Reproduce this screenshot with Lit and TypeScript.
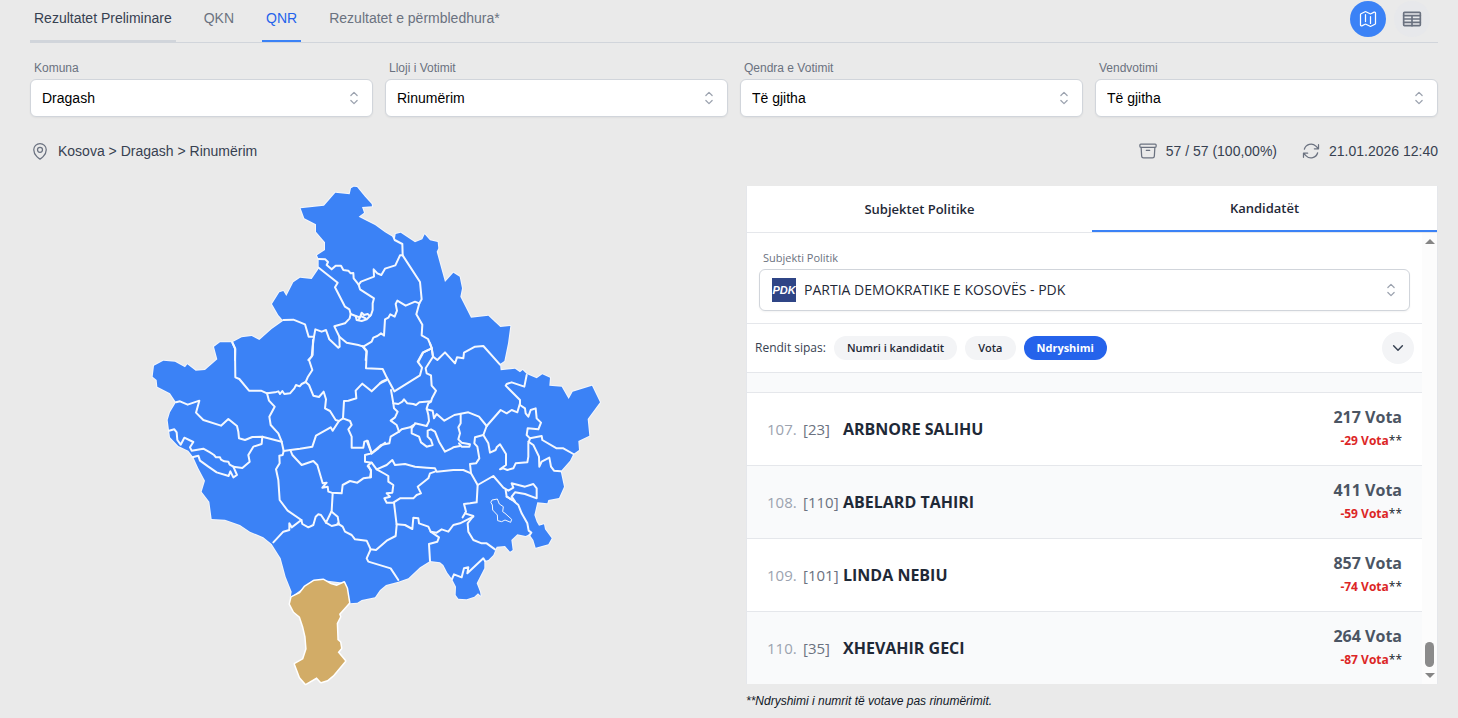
import { LitElement, html, svg, css } from "lit";
import { customElement, property, state } from "lit/decorators.js";
import { classMap } from "lit/directives/class-map.js";

/* ---------- icons ---------- */

const strokeIcon = (d: string[], size = 20, width = 1.5) => html`
  <svg class="icon" width=${size} height=${size} viewBox="0 0 24 24" fill="none" stroke="currentColor"
    stroke-width=${width} stroke-linecap="round" stroke-linejoin="round" aria-hidden="true">
    ${d.map((p) => svg`<path d=${p} />`)}
  </svg>`;

const ICONS = {
  map: [
    "M9 6.75V15m6-6v8.25m.503 3.498 4.875-2.437c.381-.19.622-.58.622-1.006V4.82c0-.836-.88-1.38-1.628-1.006l-3.869 1.934c-.317.159-.69.159-1.006 0L9.503 3.252a1.125 1.125 0 0 0-1.006 0L3.622 5.689C3.24 5.88 3 6.27 3 6.695V19.18c0 .836.88 1.38 1.628 1.006l3.869-1.934c.317-.159.69-.159 1.006 0l4.994 2.497c.317.158.69.158 1.006 0Z",
  ],
  table: [
    "M3 4h18a1 1 0 0 1 1 1v14a1 1 0 0 1-1 1H3a1 1 0 0 1-1-1V5a1 1 0 0 1 1-1Z",
    "M2 8h20M2 12h20M2 16h20M12 8v12",
  ],
  pin: [
    "M15 10.5a3 3 0 1 1-6 0 3 3 0 0 1 6 0Z",
    "M19.5 10.5c0 7.142-7.5 11.25-7.5 11.25S4.5 17.642 4.5 10.5a7.5 7.5 0 1 1 15 0Z",
  ],
  archive: [
    "m20.25 7.5-.625 10.632a2.25 2.25 0 0 1-2.247 2.118H6.622a2.25 2.25 0 0 1-2.247-2.118L3.75 7.5M10 11.25h4M3.375 7.5h17.25c.621 0 1.125-.504 1.125-1.125v-1.5c0-.621-.504-1.125-1.125-1.125H3.375c-.621 0-1.125.504-1.125 1.125v1.5c0 .621.504 1.125 1.125 1.125Z",
  ],
  refresh: [
    "M16.023 9.348h4.992v-.001M2.985 19.644v-4.992m0 0h4.992m-4.993 0 3.181 3.183a8.25 8.25 0 0 0 13.803-3.7M4.031 9.865a8.25 8.25 0 0 1 13.803-3.7l3.181 3.182m0-4.991v4.99",
  ],
  chevronDown: ["m19.5 8.25-7.5 7.5-7.5-7.5"],
  upDown: ["M8.25 15 12 18.75 15.75 15m-7.5-6L12 5.25 15.75 9"],
};

/* ---------- map geometry, drawn in four tiles plus the south ---------- */

const COUNTRY =
  "467,85 537,77 571,38 614,43 618,25 626,20 636,21 660,50 680,72 681,79 651,81 657,98 641,110 660,120 690,135 720,157 750,175 " +
  "752,162 767,158 810,187 832,178 839,163 855,181 878,186 880,205 875,215 900,306 925,278 944,290 951,325 946,350 978,413 " +
  "1030,407 1066,441 1096,438 1089,490 1078,543 1065,552 1067,571 1110,566 1125,577 1133,570 1145,582 1175,595 1192,583 " +
  "1215,593 1213,617 1250,620 1271,657 1283,635 1341,617 1365,667 1328,717 1333,767 1300,783 1302,810 1285,822 1275,842 " +
  "1247,874 1257,920 1242,954 1210,960 1207,970 1177,967 1168,1005 1175,1025 1182,1037 1197,1033 1200,1048 1220,1075 " +
  "1210,1093 1172,1103 1165,1080 1153,1063 1142,1068 1117,1063 1099,1080 1103,1110 1095,1115 1080,1098 1055,1100 1045,1125 " +
  "1030,1140 1018,1143 1018,1165 995,1210 1005,1235 1007,1247 999,1240 988,1250 965,1258 940,1256 932,1245 933,1220 921,1197 " +
  "907,1178 895,1155 885,1147 855,1143 825,1162 790,1195 760,1205 723,1215 705,1230 690,1252 650,1260 637,1268 613,1270 " +
  "597,1208 530,1200 480,1220 437,1252 440,1235 422,1190 407,1135 380,1092 355,1072 315,1055 285,1035 240,1019 200,1017 " +
  "193,965 170,935 180,902 160,865 145,832 130,812 100,798 75,772 72,750 68,720 75,697 93,667 75,640 37,620 35,600 23,590 " +
  "27,557 55,542 90,545 120,562 127,553 152,572 180,570 217,538 207,500 225,487 262,487 290,472 320,468 343,480 380,447 " +
  "415,422 400,405 381,372 403,337 415,333 424,348 445,307 465,293 500,297 521,266 521,237 516,226 540,210 540,187 513,155 " +
  "513,133 478,115";

const DRAGASH =
  "150,372 155,352 180,340 195,320 222,303 250,300 272,313 290,318 312,308 320,325 327,368 297,402 300,410 290,430 292,480 " +
  "300,487 303,505 293,517 315,543 280,585 262,600 243,606 230,592 197,611 180,592 165,552 190,538 200,507 197,470 190,440 " +
  "180,410 162,395";

const ENCLAVE =
  "757,60 772,57 778,72 790,80 788,95 795,100 815,118 812,127 795,120 785,125 773,122 772,105 758,90 757,75 753,68";

interface Tile { x: number; y: number; lines: string[]; }

const BORDERS: Tile[] = [
  {
    x: 0, y: 0,
    lines: [
      "521,237 541,238 549,246 545,255 560,268 572,257 588,257 595,270 610,272 617,280 625,279 626,295 641,314",
      "641,314 648,305 687,290 686,268 697,280 709,285 720,266 751,256 765,226 773,226",
      "521,263 578,308 570,322 600,380 613,388 617,402 614,415 600,430 568,439 583,470 584,500 580,503 553,478 543,450 530,455 511,448 507,470 503,500 500,530 490,540",
      "641,314 645,328 687,355 683,370 683,390 678,405 665,418 650,423 635,420 632,408 617,402",
      "632,408 645,412 650,398 657,405 668,402 675,408",
      "640,420 648,408 662,415",
      "415,420 445,419 480,433 491,470 506,470",
      "583,470 605,488 640,495 655,500 680,485 685,473 697,468 708,460 717,466",
      "655,500 665,512 662,540",
      "262,487 271,507 270,540",
    ],
  },
  {
    x: 645, y: 0,
    lines: [
      "100,170 104,180 127,192 128,226 180,306 185,358 178,370 169,403 187,434 185,466 204,477 215,503 219,530",
      "178,370 165,365 137,377 112,362 107,372 111,392 104,410 91,403 85,413 75,418 72,466",
      "215,505 190,517 175,545",
    ],
  },
  {
    x: 0, y: 480,
    lines: [
      "262,8 270,25 271,112 283,117 312,152 348,152 366,160 390,157 400,154 405,162 412,153 418,162 435,160 448,145 453,135 464,139 470,132 482,126",
      "504,0 503,45 492,60 502,90 488,112 482,126 492,135 505,167 522,171 536,155 543,178 540,205 555,213 572,240 582,243",
      "725,118 710,125 680,154 652,131 632,152 634,175 610,182 597,183 594,235 582,243 563,272 557,262 513,287 502,320 465,326 436,330 416,333",
      "366,160 372,182 389,200 373,230 377,255 400,280 410,305 416,333 413,345 403,347 404,370 393,388 400,420 404,480 428,512 469,540",
      "93,187 105,184 128,194 163,182 153,218 175,240 228,257 250,237 276,258 280,275 282,295 300,300 322,291 352,290 410,305",
      "352,290 350,312 325,320 310,345 314,365 292,384 265,380",
      "72,272 88,268 95,277 97,300 107,314 118,293 145,306 135,322 140,332 175,326 195,337 207,345 213,352 225,352 228,359 238,364 250,365 254,374 265,380 276,405 265,412 256,394 251,408 215,397 190,380 165,362 160,347 142,352",
      "436,330 442,345 470,375 505,363 517,375 533,430 545,428 532,443 548,440 550,455 560,458 590,460 593,435 615,423 637,428 655,415 678,412 678,390 668,378",
      "594,235 615,243 620,255 610,268 620,290 620,323 655,323 658,305 668,302 680,340",
    ],
  },
  {
    x: 645, y: 480,
    lines: [
      "7,18 20,35 18,85 68,87 80,112 103,154 180,106 186,83 173,65 188,38 215,25",
      "210,10 215,25 219,50 232,60 255,37 285,70 291,52 310,55 312,38 345,20 370,18 420,74",
      "60,130 80,120",
      "219,50 197,85 200,100 213,106 215,137 228,152 216,175 213,185 205,190 200,205 205,225 207,243 200,258 165,250",
      "93,150 100,190 115,192 127,185 132,178 142,190 160,192 168,195 178,187 213,184",
      "100,190 102,205 113,215 105,232 92,242 110,255 117,275 92,290 88,310 63,315 35,340",
      "117,275 125,268 150,262 165,252 155,265 155,280 177,290 183,307 200,320 218,315 213,300 203,290 203,272 213,268 225,275 237,305 255,335 275,325 280,322 300,318",
      "200,208 218,212 222,235 230,222 253,242 283,225 325,217 357,230 380,258",
      "302,222 302,250 295,262 300,280 295,298 305,308 330,313 328,320 305,320 297,310",
      "380,258 370,285 345,292 343,310 352,320 358,355 348,370 330,372 333,400 353,435 350,487 330,490 312,492 318,515 308,532",
      "380,258 422,210 440,220 455,210 472,217 480,190",
      "500,105 493,140 455,127 440,132 437,137 480,180 480,195 495,205 497,220 505,230 512,210 527,205 530,235 543,248 535,268 503,265 500,285 510,295",
      "510,295 545,288 547,300 590,325 610,325 640,342",
      "510,295 505,310 505,350 502,367 467,370 460,385 442,390 430,385 420,388 438,375 438,342 420,313 410,322 407,330 390,338 385,310 370,285",
      "505,305 520,315 537,350 538,380 545,365 568,353 573,380 582,392 602,394",
      "20,302 35,340 15,345 15,365 35,368 50,388 80,375 97,360 105,375 135,372 165,380 200,383 225,385 230,395 280,390 310,390 333,400",
      "35,340 55,325 75,308",
      "35,368 25,375 33,395 30,412",
      "50,388 75,402 85,408 85,425 100,435 97,458 80,460 90,470 73,475 80,488 100,488 120,475 160,475 170,465 183,460 173,440 205,415 210,400 225,395",
      "353,435 400,408 430,443 445,452 460,443 455,430 495,440 520,432 530,445 530,475 495,462 465,457 455,470 465,485",
      "437,450 440,470 455,478",
    ],
  },
  {
    x: 285, y: 900,
    lines: [
      "184,120 155,142 148,130 148,150 130,155 100,187",
      "184,120 187,132 205,142 220,135 227,110 235,103 243,105 258,128 275,93 278,40",
      "275,95 293,110 297,133 275,138 258,128",
      "293,130 308,140 315,155 335,165 345,178 380,182 392,208 408,210 440,182 467,168 470,135 462,68",
      "392,208 380,235 385,245 452,265 475,300",
      "470,133 495,135 517,147 520,113 535,115 537,130 565,140 572,155 590,158 605,148 625,155 640,135 660,130 700,110",
      "572,155 597,172 592,185 567,192 570,243",
      "675,100 700,108 683,130 685,155 700,180 725,190 740,190 765,208",
      "800,50 820,62 835,75 845,100 862,130 866,152 874,158 868,166",
      "636,297 642,283 665,292 672,265 685,262 682,280 730,235 735,243",
    ],
  },
];

@customElement("kosovo-map")
class KosovoMap extends LitElement {
  static styles = css`
    :host { display: block; width: 100%; max-width: 462px; }
    svg { display: block; width: 100%; height: auto; overflow: visible; }
    .land { fill: #3b82f6; stroke: #f3f6fc; stroke-width: 6; stroke-linejoin: round; paint-order: stroke; }
    .border { fill: none; stroke: #f4f8ff; stroke-width: 6; stroke-linejoin: round; stroke-linecap: round; }
    .thin { stroke-width: 3; }
    .selected { fill: #d2ac67; stroke: #fff; stroke-width: 9; stroke-linejoin: round; paint-order: stroke; }
  `;

  render() {
    return html`
      <svg viewBox="0 18 1386 1500" role="img" aria-label="Kosova">
        <polygon class="land" points=${COUNTRY} />
        ${BORDERS.map((t) => svg`
          <g transform="translate(${t.x} ${t.y})">
            ${t.lines.map((l) => svg`<polyline class="border" points=${l} />`)}
          </g>`)}
        <g transform="translate(285 900)">
          <polygon class="border thin" points=${ENCLAVE} />
          <polygon class="selected" points=${DRAGASH} />
        </g>
      </svg>`;
  }
}

@customElement("filter-select")
class FilterSelect extends LitElement {
  @property() label = "";
  @property() value = "";
  @property({ type: Boolean, reflect: true }) party = false;

  static styles = css`
    :host { display: block; min-width: 0; font-size: 14px; }
    label { display: block; padding-left: 4px; margin-bottom: 2px; font-size: 12px; line-height: 18px; color: #6b7280; }
    .box { position: relative; }
    select {
      display: block; width: 100%; height: 38px; padding: 0 40px 0 11px; box-sizing: border-box;
      appearance: none; border: 1px solid #d1d5db; border-radius: 6px; background: #fff; color: #000;
      font: inherit; box-shadow: 0 1px 2px rgb(0 0 0 / 0.05);
    }
    .icon { position: absolute; right: 9px; top: 50%; margin-top: -10px; color: #9ca3af; pointer-events: none; }
    .logo { position: absolute; left: 13px; top: 9px; pointer-events: none; }
    .logo rect { fill: #2f4586; }
    .logo text { fill: #fff; font: italic bold 11px "Liberation Sans", Arial, sans-serif; }
    :host([party]) label { font-size: 11px; }
    :host([party]) select { height: 42px; padding-left: 44px; font-weight: 500; color: #1f2937; }
  `;

  render() {
    return html`
      <label for="field">${this.label}</label>
      <div class="box">
        <select id="field"><option>${this.value}</option></select>
        ${this.party
          ? html`<svg class="logo" width="24" height="24" viewBox="0 0 24 24" aria-hidden="true">
              <rect width="24" height="24" /><text x="12" y="16" text-anchor="middle">PDK</text>
            </svg>`
          : null}
        ${strokeIcon(ICONS.upDown)}
      </div>`;
  }
}

interface Candidate { rank: number; no: number; name: string; votes: number; change: number; }

const CANDIDATES: Candidate[] = [
  { rank: 107, no: 23, name: "ARBNORE SALIHU", votes: 217, change: -29 },
  { rank: 108, no: 110, name: "ABELARD TAHIRI", votes: 411, change: -59 },
  { rank: 109, no: 101, name: "LINDA NEBIU", votes: 857, change: -74 },
  { rank: 110, no: 35, name: "XHEVAHIR GECI", votes: 264, change: -87 },
];

@customElement("results-panel")
class ResultsPanel extends LitElement {
  @state() private sort = "Ndryshimi";

  static styles = css`
    :host {
      display: block; background: #fff; border: 1px solid #e5e7eb; border-width: 0 1px;
      font-family: "Open Sans", "Noto Sans", sans-serif; color: #1f2937;
    }
    button { font: inherit; color: inherit; border: 0; cursor: pointer; }
    .tabs { display: grid; grid-template-columns: 1fr 1fr; border-bottom: 1px solid #e5e7eb; }
    .tab { height: 46px; padding: 0; background: none; font-size: 13px; font-weight: 600; border-bottom: 0 solid #3b82f6; }
    .tab.active { border-bottom-width: 2px; }
    .body { display: flex; }
    .main { flex: 1; min-width: 0; }
    .subject { padding: 16px 12px 12px; border-bottom: 1px solid #e5e7eb; }
    .sort { display: flex; align-items: center; gap: 8px; padding: 8px; border-bottom: 1px solid #e5e7eb; font-size: 12px; color: #374151; }
    .pill { height: 24px; padding: 0 13px; border-radius: 12px; background: #f3f4f6; font-size: 11px; font-weight: 600; color: #1f2937; }
    .pill.on { background: #2563eb; color: #fff; font-weight: 700; }
    .toggle {
      display: grid; place-items: center; width: 32px; height: 32px; margin-left: auto; padding: 0;
      border-radius: 50%; background: #f3f4f6;
    }
    ol { list-style: none; margin: 0; padding: 0; }
    li {
      display: grid; grid-template-columns: 36px 40px 1fr auto; align-items: center; padding: 12px 20px;
      border-bottom: 1px solid #e5e7eb; font-size: 15px;
    }
    li:last-child { border-bottom: 0; }
    li:nth-child(odd) { background: #f9fafb; }
    .clipped { padding: 0 20px 19px; }
    .rank { color: #9ca3af; }
    .no { color: #6b7280; }
    .name { font-size: 16px; font-weight: 700; }
    .votes { text-align: right; font-size: 16px; font-weight: 700; line-height: 24px; color: #4b5563; }
    .change { font-size: 12px; color: #dc2626; }
    .mark { font-weight: 400; color: #111827; }
    .scrollbar {
      display: flex; flex-direction: column; align-items: center; width: 15px; padding: 6px 0;
      box-sizing: border-box; background: #fcfcfc;
    }
    .up, .down { border: 5px solid transparent; border-width: 0 5px 5px; border-bottom-color: #858585; }
    .down { border-width: 5px 5px 0; border-top-color: #858585; margin-top: 6px; }
    .thumb { width: 9px; height: 25px; margin-top: auto; border-radius: 5px; background: #8b8b8b; }
  `;

  render() {
    return html`
      <div class="tabs" role="tablist">
        <button class="tab" role="tab" aria-selected="false">Subjektet Politike</button>
        <button class="tab active" role="tab" aria-selected="true">Kandidatët</button>
      </div>
      <div class="body">
        <div class="main">
          <div class="subject">
            <filter-select party label="Subjekti Politik" value="PARTIA DEMOKRATIKE E KOSOVËS - PDK"></filter-select>
          </div>
          <div class="sort">
            <span>Rendit sipas:</span>
            ${["Numri i kandidatit", "Vota", "Ndryshimi"].map((s) => html`
              <button class=${classMap({ pill: true, on: s === this.sort })} @click=${() => (this.sort = s)}>${s}</button>`)}
            <button class="toggle" aria-label="Zgjero">${strokeIcon(ICONS.chevronDown, 14, 2.5)}</button>
          </div>
          <ol>
            <li class="clipped"></li>
            ${CANDIDATES.map((c) => html`
              <li>
                <span class="rank">${c.rank}.</span>
                <span class="no">[${c.no}]</span>
                <span class="name">${c.name}</span>
                <div class="votes">
                  <div>${c.votes} Vota</div>
                  <div class="change">${c.change} Vota<span class="mark">**</span></div>
                </div>
              </li>`)}
          </ol>
        </div>
        <div class="scrollbar" aria-hidden="true">
          <div class="up"></div><div class="thumb"></div><div class="down"></div>
        </div>
      </div>`;
  }
}

@customElement("app-root")
class AppRoot extends LitElement {
  static styles = css`
    :host {
      display: block; min-height: 100vh; box-sizing: border-box; padding: 0 20px 0 30px; background: #eaeaea;
      font: 14px/20px "Liberation Sans", Arial, sans-serif; color: #374151;
    }
    nav { display: flex; align-items: flex-start; gap: 24px; border-bottom: 1px solid #d1d5db; }
    nav a { padding: 8px 4px 12px; border-bottom: 2px solid transparent; color: #6b7280; text-decoration: none; }
    nav a.section { color: #374151; border-color: #d1d5db; }
    nav a.active { color: #2563eb; border-color: #3b82f6; }
    .views { display: flex; gap: 8px; margin-left: auto; padding: 1px 8px 0 0; }
    .view {
      display: grid; place-items: center; width: 36px; height: 36px; padding: 0; border: 0; border-radius: 50%;
      background: #e7e8eb; color: #6b7280; cursor: pointer;
    }
    .view.active { background: #3b82f6; color: #fff; }
    .filters { display: grid; grid-template-columns: repeat(4, 1fr); gap: 12px; margin-top: 16px; }
    .status { display: flex; align-items: center; gap: 24px; margin: 24px 0 25px; }
    .status div { display: flex; align-items: center; gap: 8px; }
    .status .path { margin-right: auto; }
    .status .icon { color: #6b7280; }
    .content { display: grid; grid-template-columns: 1fr 1fr; gap: 24px; align-items: start; }
    kosovo-map { justify-self: center; }
    .note { margin: 8px 0 0; font-size: 12px; line-height: 18px; font-style: italic; color: #111827; }
  `;

  render() {
    return html`
      <nav>
        <a href="#" class="section">Rezultatet Preliminare</a>
        <a href="#">QKN</a>
        <a href="#" class="active">QNR</a>
        <a href="#">Rezultatet e përmbledhura*</a>
        <div class="views">
          <button class="view active" aria-label="Harta">${strokeIcon(ICONS.map)}</button>
          <button class="view" aria-label="Tabela">${strokeIcon(ICONS.table, 20, 2)}</button>
        </div>
      </nav>
      <div class="filters">
        <filter-select label="Komuna" value="Dragash"></filter-select>
        <filter-select label="Lloji i Votimit" value="Rinumërim"></filter-select>
        <filter-select label="Qendra e Votimit" value="Të gjitha"></filter-select>
        <filter-select label="Vendvotimi" value="Të gjitha"></filter-select>
      </div>
      <div class="status">
        <div class="path">${strokeIcon(ICONS.pin)}<span>Kosova &gt; Dragash &gt; Rinumërim</span></div>
        <div>${strokeIcon(ICONS.archive)}<span>57 / 57 (100,00%)</span></div>
        <div>${strokeIcon(ICONS.refresh)}<span>21.01.2026 12:40</span></div>
      </div>
      <div class="content">
        <kosovo-map></kosovo-map>
        <div>
          <results-panel></results-panel>
          <p class="note">**Ndryshimi i numrit të votave pas rinumërimit.</p>
        </div>
      </div>`;
  }
}
